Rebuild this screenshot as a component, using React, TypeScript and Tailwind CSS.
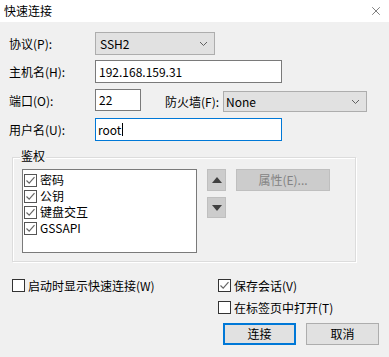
import * as React from "react";
import { X } from "lucide-react";

function Box({ checked, list }: { checked?: boolean; list?: boolean }) {
  return (
    <span
      className={
        list
          ? "flex h-[13px] w-[13px] shrink-0 items-center justify-center border border-[#555] bg-white"
          : "flex h-[13px] w-[13px] shrink-0 items-center justify-center border border-[#333] bg-white"
      }
    >
      {checked && (
        <svg width="11" height="11" viewBox="0 0 11 11">
          <path d="M1.5 5.5 L4.2 8.2 L9.5 2.2" fill="none" stroke="#666" strokeWidth="1.2" />
        </svg>
      )}
    </span>
  );
}

function Chevron() {
  return (
    <svg width="9" height="6" viewBox="0 0 9 6">
      <path d="M1 1 L4.5 4.5 L8 1" fill="none" stroke="#606060" strokeWidth="1" />
    </svg>
  );
}

const authItems = [
  { name: "密码", checked: true },
  { name: "公钥", checked: true },
  { name: "键盘交互", checked: true },
  { name: "GSSAPI", checked: true },
];

export default function App() {
  return (
    <div className="h-[357px] w-[389px] overflow-hidden bg-[#f0f0f0] font-['Noto_Sans_CJK_SC',sans-serif] text-[12px] leading-none text-black">
      {/* title bar */}
      <div className="flex h-[22px] items-center justify-between bg-white pl-[4px] pr-[6px]">
        <span className="leading-none">快速连接</span>
        <X className="h-[14px] w-[14px] text-[#222]" strokeWidth={1} />
      </div>

      {/* 协议 */}
      <div className="mt-[10px] flex h-[23px] items-center">
        <span className="w-[95px] shrink-0 pl-[9px]">协议(P):</span>
        <div className="flex h-[23px] w-[120px] items-center justify-between border border-[#adadad] bg-[#e1e1e1] pl-[4px] pr-[6px]">
          <span>SSH2</span>
          <Chevron />
        </div>
      </div>

      {/* 主机名 */}
      <div className="mt-[5px] flex h-[23px] items-center">
        <span className="w-[95px] shrink-0 pl-[9px]">主机名(H):</span>
        <div className="flex h-[23px] w-[187px] items-center border border-[#7a7a7a] bg-white pl-[3px]">
          192.168.159.31
        </div>
      </div>

      {/* 端口 / 防火墙 */}
      <div className="mt-[6px] flex h-[23px] items-center">
        <span className="w-[95px] shrink-0 pl-[9px]">端口(O):</span>
        <div className="flex h-[22px] w-[46px] items-center self-start border border-[#7a7a7a] bg-white pl-[3px]">
          22
        </div>
        <span className="ml-[24px] w-[58px] shrink-0 pt-[2px]">防火墙(F):</span>
        <div className="flex h-[21px] w-[144px] items-center justify-between self-end border border-[#adadad] bg-[#e1e1e1] pl-[2px] pr-[6px]">
          <span>None</span>
          <Chevron />
        </div>
      </div>

      {/* 用户名 */}
      <div className="mt-[6px] flex h-[23px] items-center">
        <span className="w-[95px] shrink-0 pl-[9px]">用户名(U):</span>
        <div className="flex h-[23px] w-[187px] items-center border border-[#0078d7] bg-white pl-[2px]">
          <span>root</span>
          <span className="ml-[1px] h-[13px] w-[1px] bg-black" />
        </div>
      </div>

      {/* 鉴权 group */}
      <div className="relative ml-[12px] mt-[16px] h-[105px] w-[344px] border border-[#dcdcdc] shadow-[inset_1px_1px_0_#ffffff,1px_1px_0_#ffffff]">
        <span className="absolute left-[7px] top-[-8px] bg-[#f0f0f0] px-[1px] text-[12px]">鉴权</span>
        <div className="flex pl-[9px] pt-[11px]">
          <div className="flex h-[84px] w-[175px] flex-col border border-[#7a7a7a] bg-white pl-[1px] pt-[2px]">
            {authItems.map((it) => (
              <div key={it.name} className="flex h-[16px] items-center gap-[3px]">
                <Box checked={it.checked} list />
                <span>{it.name}</span>
              </div>
            ))}
          </div>
          <div className="ml-[10px] flex flex-col gap-[6px]">
            <div className="flex h-[22px] w-[19px] items-center justify-center border border-[#bfbfbf] bg-[#cccccc]">
              <svg width="10" height="6" viewBox="0 0 10 6">
                <path d="M0 6 L5 0 L10 6 Z" fill="#404040" />
              </svg>
            </div>
            <div className="flex h-[21px] w-[19px] items-center justify-center border border-[#bfbfbf] bg-[#cccccc]">
              <svg width="10" height="6" viewBox="0 0 10 6">
                <path d="M0 0 L10 0 L5 6 Z" fill="#404040" />
              </svg>
            </div>
          </div>
          <div className="ml-[10px] flex h-[22px] w-[94px] items-center justify-center border border-[#bfbfbf] bg-[#cccccc] text-[#838383]">
            属性(E)...
          </div>
        </div>
      </div>

      {/* options */}
      <div className="mt-[17px] flex">
        <div className="flex w-[218px] items-start gap-[3px] pl-[12px]">
          <Box />
          <span className="leading-[13px]">启动时显示快速连接(W)</span>
        </div>
        <div className="flex flex-col gap-[9px]">
          <div className="flex items-center gap-[3px]">
            <Box checked />
            <span className="leading-[13px]">保存会话(V)</span>
          </div>
          <div className="flex items-center gap-[3px]">
            <Box />
            <span className="leading-[13px]">在标签页中打开(T)</span>
          </div>
        </div>
      </div>

      {/* buttons */}
      <div className="ml-[223px] mt-[9px] flex gap-[10px]">
        <button className="flex h-[22px] w-[73px] items-center justify-center border-2 border-[#0078d7] bg-[#e1e1e1]">
          连接
        </button>
        <button className="flex h-[22px] w-[73px] items-center justify-center border border-[#adadad] bg-[#e1e1e1]">
          取消
        </button>
      </div>
    </div>
  );
}
